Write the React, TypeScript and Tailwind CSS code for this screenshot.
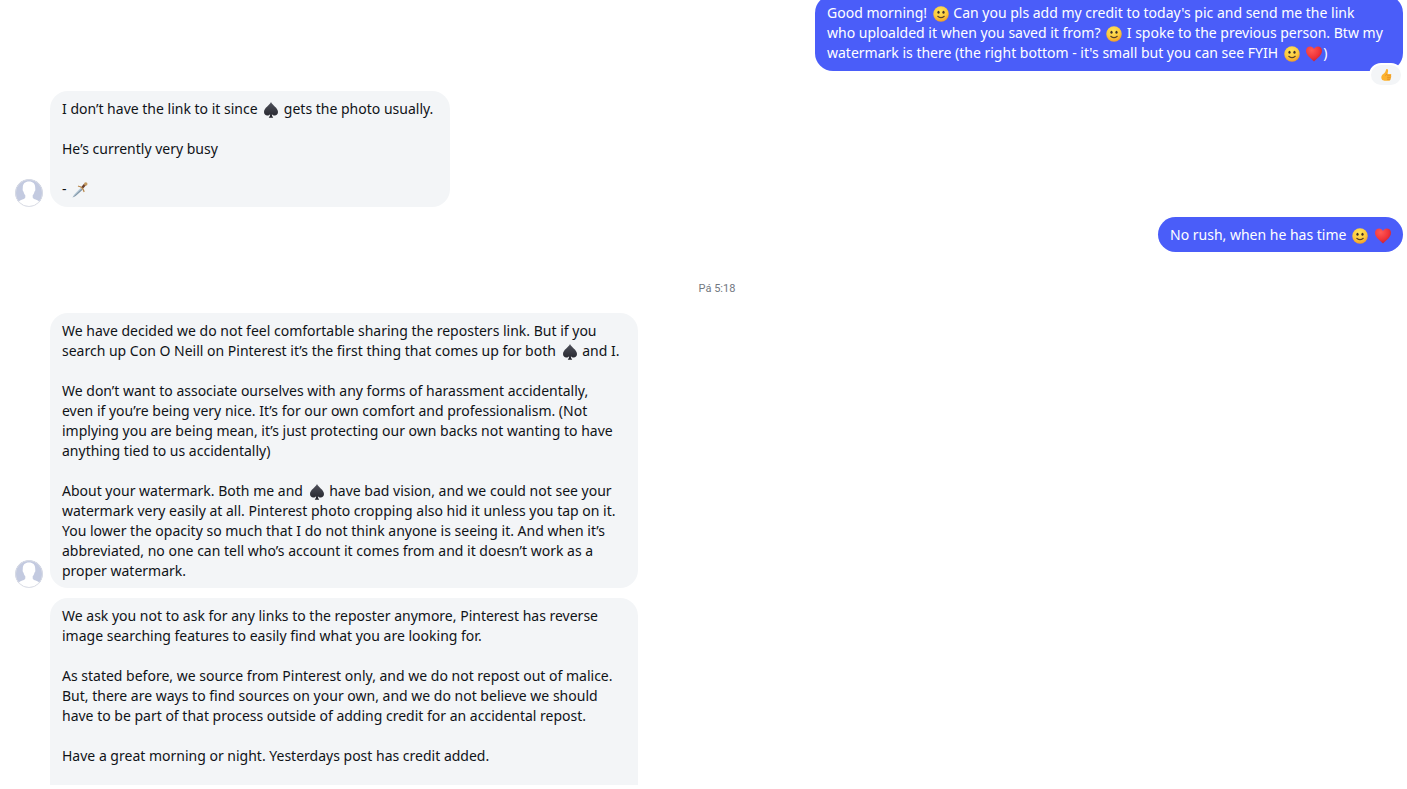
import React from "react";
import clsx from "clsx";

const Smile = () => (
  <>
    <defs>
      <radialGradient id="smile-fill" cx="0.45" cy="0.3" r="0.75">
        <stop offset="0" stopColor="#ffe45c" />
        <stop offset="0.6" stopColor="#fcc93c" />
        <stop offset="1" stopColor="#ee9225" />
      </radialGradient>
    </defs>
    <circle cx="16" cy="16" r="15.5" fill="url(#smile-fill)" />
    <ellipse cx="11" cy="12.5" rx="2.2" ry="3" fill="#3f3029" />
    <ellipse cx="21" cy="12.5" rx="2.2" ry="3" fill="#3f3029" />
    <path
      d="M9.5 20.5Q16 26 22.5 20.5"
      fill="none"
      stroke="#5c4128"
      strokeWidth="2.2"
      strokeLinecap="round"
    />
  </>
);

const Heart = () => (
  <>
    <defs>
      <radialGradient id="heart-fill" cx="0.35" cy="0.25" r="0.8">
        <stop offset="0" stopColor="#ff5a55" />
        <stop offset="0.6" stopColor="#f0353a" />
        <stop offset="1" stopColor="#c51f35" />
      </radialGradient>
    </defs>
    <path
      d="M16 31C13 27 0 20 0 9.5C0 4 4 1 8.5 1C12 1 14.5 3 16 6C17.500 3 20 1 23.500 1C28 1 32 4 32 9.500C32 20 19 27 16 31Z"
      fill="url(#heart-fill)"
    />
  </>
);

const Spade = () => (
  <>
    <defs>
      <linearGradient id="spade-fill" x1="0" y1="0" x2="0" y2="1">
        <stop offset="0" stopColor="#50525c" />
        <stop offset="1" stopColor="#23242b" />
      </linearGradient>
    </defs>
    <path
      d="M16 0C18.500 6 30 12 30 20C30 24.500 27 27 23.500 27C21 27 19 26 17.800 24.500C17.900 27 18.500 29 20.500 31.500H11.500C13.500 29 14.100 27 14.200 24.500C13 26 11 27 8.500 27C5 27 2 24.500 2 20C2 12 13.500 6 16 0Z"
      fill="url(#spade-fill)"
    />
  </>
);

const Dagger = () => (
  <>
    <path d="M1 31L4 25.500L17 12L21 15.500L7 28Z" fill="#b7cad8" />
    <path d="M1 31L19 13.500L21 15.500L7 28Z" fill="#8498a8" />
    <path d="M20 12L26 5" stroke="#693f2b" strokeWidth="5" />
    <path
      d="M13 8.500Q17 9 20 12Q23 15 24 19"
      fill="none"
      stroke="#b9894d"
      strokeWidth="2.5"
      strokeLinecap="round"
    />
    <circle cx="27.5" cy="4" r="3.5" fill="#c39a60" />
  </>
);

const Thumb = () => (
  <>
    <path
      d="M8 14C13 11 15 7 16 2C17 -1 21 0 21.500 4C22 7 20.500 10 19.500 13H27C31 13 31 17 28.500 18C31 19.500 30.500 22 28 23C30 24.500 29 27 27 27.500C28 30 26 31.500 23.500 31.500H14C11 31.500 9 30 6 29C2 25 3 17 8 14Z"
      fill="#fcb22f"
    />
    <path
      d="M19.500 13Q16 13.500 15 17M20 18H28.500M20 23H28M20 27.500H27"
      fill="none"
      stroke="#dc8420"
      strokeWidth="1.8"
      strokeLinecap="round"
    />
  </>
);

const emojis: Record<string, { label: string; Icon: React.FC }> = {
  "🙂": { label: "smile", Icon: Smile },
  "❤": { label: "heart", Icon: Heart },
  "♠": { label: "spade", Icon: Spade },
  "🗡": { label: "dagger", Icon: Dagger },
  "👍": { label: "thumbs up", Icon: Thumb },
};

const Emoji = ({ char, className }: { char: string; className: string }) => {
  const { label, Icon } = emojis[char];
  return (
    <svg
      viewBox="0 0 32 32"
      role="img"
      aria-label={label}
      className={className}
    >
      <Icon />
    </svg>
  );
};

const MessageText = ({ text }: { text: string }) => (
  <div className="whitespace-pre">
    {text.split("\n").map((line, row) => (
      <p key={row} className="h-5">
        {line
          .split(/(🙂|❤|♠|🗡)/u)
          .map((part, index) =>
            emojis[part] ? (
              <Emoji
                key={index}
                char={part}
                className="inline-block size-4 ml-0.5 mr-px align-text-bottom"
              />
            ) : (
              part && <span key={index}>{part}</span>
            )
          )}
      </p>
    ))}
  </div>
);

const Avatar = () => (
  <svg
    viewBox="0 0 28 28"
    role="img"
    aria-label="Profile picture"
    className="size-7 shrink-0 rounded-full"
  >
    <circle cx="14" cy="14" r="14" fill="#c3cae0" />
    <path
      d="M14 2.500C10 2.500 7.800 4.800 7.800 8.500C7.800 9.500 7.600 10 7.700 11C7.800 12 8.500 12.300 8.700 13.200C9 14.600 9.700 15.500 10.300 16.200V18.500C9.500 20.500 5.500 20.500 3 23C7 29.500 21 29.500 25 23C22.500 20.500 18.500 20.500 17.700 18.500V16.200C18.300 15.500 19 14.600 19.300 13.200C19.500 12.300 20.200 12 20.300 11C20.400 10 20.200 9.500 20.200 8.500C20.200 4.800 18 2.500 14 2.500Z"
      fill="#fff"
    />
    <circle cx="14" cy="14" r="13.5" fill="none" stroke="#d9dce4" />
  </svg>
);

type MessageProps = {
  text: string;
  className: string;
  avatar?: boolean;
};

const Received = ({ text, className, avatar }: MessageProps) => (
  <li className="flex items-end gap-[7px]">
    {avatar ? <Avatar /> : <div className="w-7 shrink-0" />}
    <div className={clsx("bg-[#f3f5f7] px-3 pt-2", className)}>
      <MessageText text={text} />
    </div>
  </li>
);

const Sent = ({
  text,
  className,
  reaction,
}: MessageProps & { reaction?: string }) => (
  <li className="flex justify-end">
    <div
      className={clsx(
        "relative bg-[#4a5df9] px-3 pt-2 rounded-[18px] text-white",
        className
      )}
    >
      <MessageText text={text} />
      {reaction && (
        <button
          type="button"
          className="absolute -bottom-4 right-0 flex h-6 w-[34px] items-center justify-center rounded-full border-2 border-white bg-[#f3f5f7]"
        >
          <Emoji char={reaction} className="size-3" />
        </button>
      )}
    </div>
  </li>
);

const opening = `Good morning! 🙂 Can you pls add my credit to today's pic and send me the link
who uploalded it when you saved it from? 🙂 I spoke to the previous person. Btw my
watermark is there (the right bottom - it's small but you can see FYIH 🙂 ❤)`;

const noLink = `I don’t have the link to it since ♠ gets the photo usually.

He’s currently very busy

- 🗡`;

const decision = `We have decided we do not feel comfortable sharing the reposters link. But if you
search up Con O Neill on Pinterest it’s the first thing that comes up for both ♠ and I.

We don’t want to associate ourselves with any forms of harassment accidentally,
even if you’re being very nice. It’s for our own comfort and professionalism. (Not
implying you are being mean, it’s just protecting our own backs not wanting to have
anything tied to us accidentally)

About your watermark. Both me and ♠ have bad vision, and we could not see your
watermark very easily at all. Pinterest photo cropping also hid it unless you tap on it.
You lower the opacity so much that I do not think anyone is seeing it. And when it’s
abbreviated, no one can tell who’s account it comes from and it doesn’t work as a
proper watermark.`;

const request = `We ask you not to ask for any links to the reposter anymore, Pinterest has reverse
image searching features to easily find what you are looking for.

As stated before, we source from Pinterest only, and we do not repost out of malice.
But, there are ways to find sources on your own, and we do not believe we should
have to be part of that process outside of adding credit for an accidental repost.

Have a great morning or night. Yesterdays post has credit added.`;

export default function App() {
  return (
    <main className="overflow-hidden bg-white pl-[15px] pr-1 pb-1 font-['Noto_Sans',sans-serif] text-[14px] leading-5 text-[#101317]">
      <ul className="-mt-[5px] flex flex-col gap-2.5">
        <Sent text={opening} className="w-[588px] pb-2" reaction="👍" />
        <li className="h-0" />
        <Received
          text={noLink}
          className="w-[400px] rounded-[18px] pb-2"
          avatar
        />
        <Sent
          text={"No rush, when he has time 🙂 ❤"}
          className="w-[245px] pb-[7px]"
        />
        <li className="flex h-[41px] items-center justify-center pt-3 pl-4 font-[Roboto,sans-serif] text-[11px] leading-4 text-[#72777f]">
          <time>Pá 5:18</time>
        </li>
        <Received
          text={decision}
          className="w-[588px] rounded-[18px] pb-[7px]"
          avatar
        />
        <Received
          text={request}
          className="w-[588px] rounded-t-[18px] pb-[19px]"
        />
      </ul>
    </main>
  );
}
